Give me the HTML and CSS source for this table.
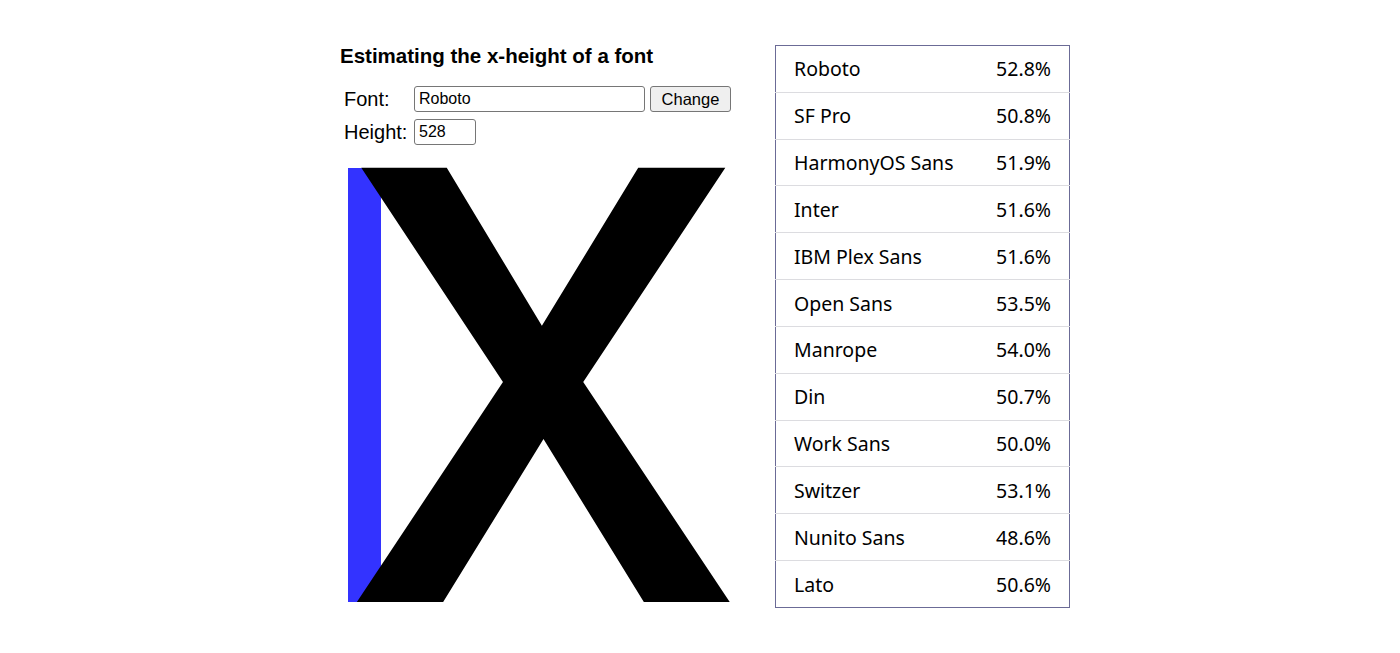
FILE: index.html
```html
<!DOCTYPE html>
<html>
<head>
<meta charset="utf-8">
<link rel="stylesheet" href="styles.css">
</head>
<body>
<div class="page">
  <div class="left">
    <h1 class="title">Estimating the x-height of a font</h1>
    <div class="form">
      <label class="lbl">Font:</label>
      <div class="field-row">
        <input class="inp inp-font" type="text" value="Roboto">
        <button class="btn">Change</button>
      </div>
      <label class="lbl">Height:</label>
      <div class="field-row">
        <input class="inp inp-height" type="text" value="528">
      </div>
    </div>
    <svg class="glyph" width="400" height="434" viewBox="0 0 400 434">
      <rect x="0" y="0" width="33" height="434" fill="#3333ff"></rect>
      <text x="-8" y="434" font-family="Roboto" font-size="822" fill="#000">x</text>
    </svg>
  </div>
  <table class="results">
    <tr><td>Roboto</td><td class="pct">52.8%</td></tr>
    <tr><td>SF Pro</td><td class="pct">50.8%</td></tr>
    <tr><td>HarmonyOS Sans</td><td class="pct">51.9%</td></tr>
    <tr><td>Inter</td><td class="pct">51.6%</td></tr>
    <tr><td>IBM Plex Sans</td><td class="pct">51.6%</td></tr>
    <tr><td>Open Sans</td><td class="pct">53.5%</td></tr>
    <tr><td>Manrope</td><td class="pct">54.0%</td></tr>
    <tr><td>Din</td><td class="pct">50.7%</td></tr>
    <tr><td>Work Sans</td><td class="pct">50.0%</td></tr>
    <tr><td>Switzer</td><td class="pct">53.1%</td></tr>
    <tr><td>Nunito Sans</td><td class="pct">48.6%</td></tr>
    <tr><td>Lato</td><td class="pct">50.6%</td></tr>
  </table>
</div>
</body>
</html>
```

FILE: styles.css
```css
html, body {
  margin: 0;
  padding: 0;
  background: #fff;
}
body {
  font-family: "Liberation Sans", Arial, sans-serif;
  color: #000;
}
.page {
  display: flex;
  align-items: flex-start;
  padding-left: 340px;
  padding-top: 44px;
  gap: 44px;
}
.left {
  display: flex;
  flex-direction: column;
  width: 391px;
}
.title {
  margin: 0;
  font-size: 20.5px;
  font-weight: bold;
  line-height: 24px;
}
.form {
  display: grid;
  grid-template-columns: 70px auto;
  row-gap: 7px;
  margin-top: 18px;
  padding-left: 4px;
  align-items: center;
}
.lbl {
  font-size: 20px;
  line-height: 26px;
}
.field-row {
  display: flex;
  gap: 5px;
}
.inp {
  box-sizing: border-box;
  height: 26px;
  border: 1px solid #767676;
  border-radius: 3px;
  font-family: "Liberation Sans", Arial, sans-serif;
  font-size: 16px;
  padding: 1px 4px;
  color: #000;
  background: #fff;
}
.inp-font { width: 231px; }
.inp-height { width: 62px; }
.btn {
  box-sizing: border-box;
  height: 26px;
  width: 81px;
  border: 1px solid #767676;
  border-radius: 3px;
  background: #efefef;
  font-family: "Liberation Sans", Arial, sans-serif;
  font-size: 16.5px;
  color: #000;
  padding: 0;
}
.glyph {
  display: block;
  margin-top: 23px;
  margin-left: 8px;
  overflow: visible;
}
.results {
  margin-top: 1px;
  border-collapse: collapse;
  border: 1px solid #6b6b96;
  width: 295px;
  font-family: "Noto Sans", Inter, sans-serif;
  font-size: 19.5px;
}
.results td {
  height: 46.83px;
  padding: 0 18px;
  border-bottom: 1px solid #dcdce0;
  box-sizing: border-box;
}
.results tr:last-child td {
  border-bottom: none;
}
.results .pct {
  text-align: right;
}
```
